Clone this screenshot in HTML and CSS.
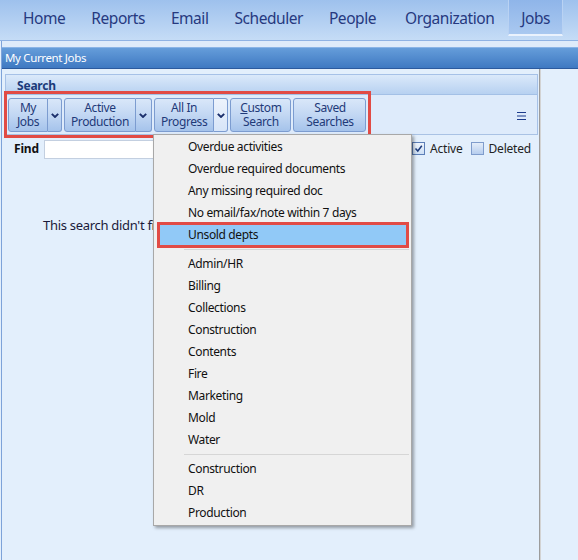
FILE: index.html
```html
<!DOCTYPE html>
<html lang="en">
<head>
<meta charset="utf-8">
<title>My Current Jobs</title>
<link rel="stylesheet" href="styles.css">
</head>
<body>
<nav class="nav">
  <a class="nav-item">Home</a>
  <a class="nav-item">Reports</a>
  <a class="nav-item">Email</a>
  <a class="nav-item">Scheduler</a>
  <a class="nav-item">People</a>
  <a class="nav-item nav-item-wide">Organization</a>
  <a class="nav-item is-active">Jobs</a>
</nav>

<div class="workspace">
  <div class="title-bar">My Current Jobs</div>
  <div class="work-body">
    <div class="main-col">
      <section class="search-panel">
        <div class="search-head">Search</div>
        <div class="toolbar">
          <div class="split-btn">
            <button class="btn btn-main">My<br>Jobs</button>
            <button class="btn btn-drop"><svg viewBox="0 0 8 5" width="8" height="5"><path d="M0.8 0.8 L4 4 L7.2 0.8" /></svg></button>
          </div>
          <div class="split-btn">
            <button class="btn btn-main">Active<br>Production</button>
            <button class="btn btn-drop btn-drop-wide"><svg viewBox="0 0 8 5" width="8" height="5"><path d="M0.8 0.8 L4 4 L7.2 0.8" /></svg></button>
          </div>
          <div class="split-btn">
            <button class="btn btn-main">All In<br>Progress</button>
            <button class="btn btn-drop is-open"><svg viewBox="0 0 8 5" width="8" height="5"><path d="M0.8 0.8 L4 4 L7.2 0.8" /></svg></button>
          </div>
          <button class="btn btn-single"><u>C</u>ustom<br>Search</button>
          <button class="btn btn-single btn-saved">Saved<br>Searches</button>
          <span class="menu-toggle">
            <svg viewBox="0 0 9 9" width="9" height="9"><path d="M0 1.5 H9 M0 5 H9 M0 8.5 H9" /></svg>
          </span>
        </div>
        <div class="callout"></div>
      </section>

      <div class="find-row">
        <label class="find-label" for="find">Find</label>
        <input class="find-input" id="find" type="text">
        <label class="check"><span class="check-box is-checked"><svg viewBox="0 0 11 11" width="11" height="11"><path d="M2.5 5.5 L4.8 8 L8.8 2.8" /></svg></span>Active</label>
        <label class="check"><span class="check-box"></span>Deleted</label>
      </div>

      <p class="empty-msg">This search didn't find any jobs.</p>
    </div>
    <div class="side-col"></div>
  </div>
</div>

<ul class="dropdown">
  <li class="menu-item">Overdue activities</li>
  <li class="menu-item">Overdue required documents</li>
  <li class="menu-item">Any missing required doc</li>
  <li class="menu-item">No email/fax/note within 7 days</li>
  <li class="menu-item is-selected">Unsold depts</li>
  <li class="menu-sep"></li>
  <li class="menu-item">Admin/HR</li>
  <li class="menu-item">Billing</li>
  <li class="menu-item">Collections</li>
  <li class="menu-item">Construction</li>
  <li class="menu-item">Contents</li>
  <li class="menu-item">Fire</li>
  <li class="menu-item">Marketing</li>
  <li class="menu-item">Mold</li>
  <li class="menu-item">Water</li>
  <li class="menu-sep"></li>
  <li class="menu-item">Construction</li>
  <li class="menu-item">DR</li>
  <li class="menu-item">Production</li>
</ul>
</body>
</html>
```
FILE: styles.css
```css
html, body {
  height: 100%;
}

body {
  margin: 0;
  display: flex;
  flex-direction: column;
  font-family: "Noto Sans", "Open Sans", sans-serif;
  font-size: 12px;
  letter-spacing: -0.35px;
  color: #111;
  background: #e3effc;
  position: relative;
  overflow: hidden;
}

/* ---- top navigation ---- */
.nav {
  display: flex;
  height: 40px;
  padding-left: 10px;
  background: linear-gradient(#9ec1ed, #c5dcf6);
  border-bottom: 1px solid #8fb2e3;
  flex-shrink: 0;
}

.nav-item {
  height: 36px;
  line-height: 36px;
  padding: 0 13px;
  font-size: 15.5px;
  letter-spacing: -0.45px;
  color: #26397f;
  cursor: default;
}

.nav-item-wide {
  padding-left: 16px;
  padding-right: 14px;
}

.nav-item.is-active {
  padding: 0 12px;
  background: linear-gradient(#8fb5e9, #a9c8f0);
  border-left: 1px solid #b9d2f3;
  border-right: 1px solid #b9d2f3;
  border-bottom: 2px solid #eaf2fd;
  height: 34px;
}

/* ---- workspace ---- */
.workspace {
  flex: 1;
  display: flex;
  flex-direction: column;
  margin-left: 1px;
  padding-top: 6px;
  border-left: 1px solid #7ea3d9;
  background: #deebfa;
}

.title-bar {
  height: 20px;
  line-height: 20px;
  padding-left: 3px;
  font-size: 11.5px;
  color: #fff;
  background: linear-gradient(#659dda, #3f79c2);
  border-top: 1px solid #8ab4e6;
  border-bottom: 1px solid #2c5a9e;
}

.work-body {
  flex: 1;
  display: flex;
}

.main-col {
  width: 537px;
  padding-top: 5px;
  background: #e3effc;
  border-right: 1px solid #9c9c9c;
  position: relative;
}

.side-col {
  flex: 1;
  border-left: 1px solid #d3d3d3;
  background: #e3effc;
}

/* ---- search panel ---- */
.search-panel {
  position: relative;
  margin-left: 3px;
  width: 531px;
  border: 1px solid #a6c1e7;
  border-bottom-color: #a9c2e4;
}

.search-head {
  height: 17px;
  padding-top: 2px;
  line-height: 18px;
  padding-left: 11px;
  font-weight: bold;
  font-size: 12px;
  letter-spacing: -0.2px;
  color: #1c3b7a;
  background: linear-gradient(#dbe9fa, #b7d1f1);
  border-bottom: 1px solid #a3c0e6;
}

.toolbar {
  display: flex;
  align-items: flex-start;
  gap: 2px;
  height: 39px;
  padding: 3px 0 0 2px;
  box-sizing: border-box;
  background: #deebfb;
}

.btn {
  font: inherit;
  letter-spacing: -0.4px;
  line-height: 14px;
  height: 34px;
  margin: 0;
  padding: 0 6px;
  color: #1f3a79;
  background: linear-gradient(#d9e7f9, #c2d7f3 50%, #a5c3eb);
  border: 1px solid #7c9cd0;
  border-radius: 3px;
  cursor: default;
}

.split-btn {
  display: flex;
}

.btn-main {
  border-radius: 3px 0 0 3px;
}

.btn-main:first-child {
  min-width: 40px;
}

.btn-drop {
  width: 14px;
  padding: 0;
  border-left: none;
  border-radius: 0 3px 3px 0;
  display: flex;
  align-items: center;
  justify-content: center;
}

.btn-drop-wide {
  width: 16px;
}

.btn-drop svg path {
  fill: none;
  stroke: #1b2f6b;
  stroke-width: 1.9;
}

.btn-drop.is-open {
  background: linear-gradient(#edf3fc, #d7e5f8);
}

.btn-single {
  padding: 0 9px;
}

.btn-single u {
  text-decoration: underline;
  text-underline-offset: 1px;
}

.btn-saved {
  min-width: 73px;
  padding: 0 7px;
}

.menu-toggle {
  margin-left: auto;
  margin-right: 11px;
  margin-top: 13px;
  display: flex;
}

.menu-toggle svg path {
  stroke: #1d3b8c;
  stroke-width: 1.2;
}

/* red highlight frame around the search buttons */
.callout {
  position: absolute;
  left: -2px;
  top: 16px;
  width: 367px;
  height: 47px;
  box-sizing: border-box;
  border: 3px solid #e14b45;
  pointer-events: none;
}

/* ---- find row ---- */
.find-row {
  display: flex;
  align-items: center;
  height: 26px;
  padding-left: 12px;
}

.find-label {
  width: 31px;
  font-weight: bold;
  color: #111;
  letter-spacing: -0.2px;
}

.find-input {
  width: 365px;
  height: 19px;
  box-sizing: border-box;
  margin: 2px 11px 0 0;
  border: 1px solid #c3cfe0;
  background: #fff;
  padding: 0;
}

.check {
  display: flex;
  align-items: center;
  margin-right: 8px;
  color: #222;
  letter-spacing: -0.2px;
}

.check-box {
  width: 11px;
  height: 11px;
  margin-right: 5px;
  border: 1px solid #7f9ccc;
  background: linear-gradient(#e4edf9, #b6cdee);
  display: flex;
}

.check-box.is-checked {
  border-color: #5d7fb8;
  background: linear-gradient(#eef4fc, #cddff5);
}

.check-box svg path {
  fill: none;
  stroke: #1c3a7b;
  stroke-width: 1.5;
}

.empty-msg {
  margin: 55px 0 0 41px;
  font-size: 13px;
  letter-spacing: -0.3px;
  color: #1a1a3a;
}

/* ---- open dropdown menu ---- */
.dropdown {
  position: absolute;
  left: 153px;
  top: 134px;
  width: 257px;
  margin: 0;
  padding: 1px 0;
  list-style: none;
  background: #f0f0f0;
  border: 1px solid #a8a8a8;
  box-shadow: 2px 2px 3px rgba(0, 0, 0, 0.35);
}

.menu-item {
  position: relative;
  height: 22px;
  line-height: 22px;
  padding-left: 34px;
  color: #111;
}

.menu-item.is-selected {
  margin: 0 2px 0 3px;
  padding-left: 31px;
  background: #91c9f7;
}

.menu-item.is-selected::after {
  content: "";
  position: absolute;
  left: 0;
  right: 0;
  top: -2px;
  bottom: -2px;
  border: 3px solid #e14b45;
}

.menu-sep {
  height: 1px;
  margin: 3px 2px 3px 30px;
  background: #d6d6d6;
}
```
